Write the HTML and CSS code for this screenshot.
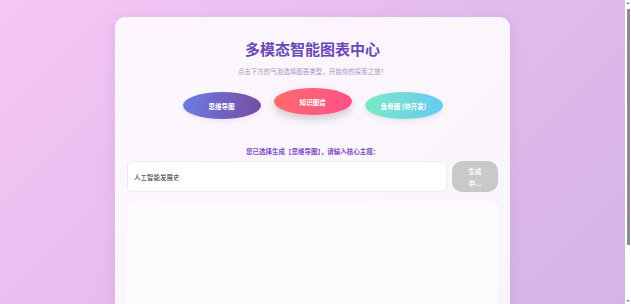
FILE: index.html
```html
<!DOCTYPE html>
<html lang="zh-CN">
<head>
  <meta charset="UTF-8" />
  <meta name="viewport" content="width=device-width, initial-scale=1.0"/>
  <title>多模态智能图表中心</title>
  <link rel="stylesheet" href="styles.css">
</head>
<body>
  <div class="container">
    <h1>多模态智能图表中心</h1>
    <p class="subtitle">点击下方的气泡选择图表类型，开始你的探索之旅！</p>

    <div class="bubbles">
      <button class="bubble mind">思维导图</button>
      <button class="bubble graph active">知识图谱</button>
      <button class="bubble fish">鱼骨图 (待开发)</button>
    </div>

    <div class="prompt">您已选择生成【思维导图】，请输入核心主题：</div>

    <div class="input-row">
      <input type="text" id="topic" value="人工智能发展史">
      <button class="generate" disabled>生成中...</button>
    </div>

    <div class="result"></div>
  </div>

  <!-- barra de desplazamiento dibujada -->
  <div class="scrollbar">
    <span class="arrow up"></span>
    <span class="thumb"></span>
    <span class="arrow down"></span>
  </div>
</body>
</html>
```

FILE: styles.css
```css
html {
  background: linear-gradient(135deg, #f5c6f4 0%, #e2bbec 50%, #d1b3e4 100%);
  min-height: 100%;
}
body {
  font-family: "Noto Sans CJK SC", "Noto Sans", sans-serif;
  margin: 0;
  padding: 17px 6px 17px 0;
}
.container {
  width: 371px;
  margin: 0 auto;
  background: rgba(255, 255, 255, 0.85);
  padding: 22px 12px 12px;
  border-radius: 10px;
  box-shadow: 0 4px 14px rgba(120, 60, 150, 0.12);
}
h1 {
  margin: 0;
  font-size: 15px;
  line-height: 20px;
  text-align: center;
  color: #6a48b6;
  font-weight: bold;
}
.subtitle {
  margin: 7px 0 0;
  font-size: 6.5px;
  line-height: 10px;
  text-align: center;
  color: #a898bd;
}
.bubbles {
  display: flex;
  justify-content: center;
  align-items: flex-start;
  gap: 13px;
  margin-top: 16px;
}
.bubble {
  width: 78px;
  height: 27px;
  border: none;
  border-radius: 50%;
  color: #fff;
  font-family: inherit;
  font-size: 6.5px;
  font-weight: bold;
  padding: 0;
  cursor: pointer;
  box-shadow: 0 2px 5px rgba(0, 0, 0, 0.08);
}
.bubble.mind {
  background: linear-gradient(100deg, #6a7de6 0%, #764ba2 100%);
}
.bubble.graph {
  background: linear-gradient(100deg, #ff6d6b 0%, #ff5089 100%);
}
.bubble.fish {
  background: linear-gradient(100deg, #7ceac4 0%, #66c9f3 100%);
}
.bubble.active {
  transform: translateY(-4px);
  box-shadow: 0 4px 8px rgba(0, 0, 0, 0.18);
}
.prompt {
  margin-top: 27px;
  font-size: 6.5px;
  line-height: 10px;
  text-align: center;
  font-weight: bold;
  color: #7b50c2;
}
.input-row {
  display: flex;
  gap: 5px;
  margin-top: 5px;
}
.input-row input {
  flex: 1;
  height: 31px;
  box-sizing: border-box;
  border: 1px solid #efe9f4;
  border-radius: 5px;
  background: #fff;
  padding: 0 6px;
  font-family: inherit;
  font-size: 6.5px;
  color: #333;
  outline: none;
}
.generate {
  width: 46px;
  height: 31px;
  border: none;
  border-radius: 10px;
  background: #c9c9c9;
  color: #fff;
  font-family: inherit;
  font-size: 6.5px;
  font-weight: bold;
  line-height: 12px;
  padding: 3px 13px;
}
.result {
  margin-top: 9px;
  height: 140px;
  background: #fdfbfe;
  border-radius: 6px;
}

/* barra lateral fija */
.scrollbar {
  position: fixed;
  top: 0;
  right: 0;
  bottom: 0;
  width: 6px;
  background: #fff;
  display: flex;
  flex-direction: column;
  align-items: center;
}
.arrow {
  width: 0;
  height: 0;
  border-left: 2px solid transparent;
  border-right: 2px solid transparent;
  margin: 2px 0;
}
.arrow.up {
  border-bottom: 2px solid #8a8a8a;
}
.arrow.down {
  margin-top: auto;
  border-top: 2px solid #8a8a8a;
}
.thumb {
  width: 3px;
  height: 236px;
  margin-top: 3px;
  background: #8c8c8c;
}
```
